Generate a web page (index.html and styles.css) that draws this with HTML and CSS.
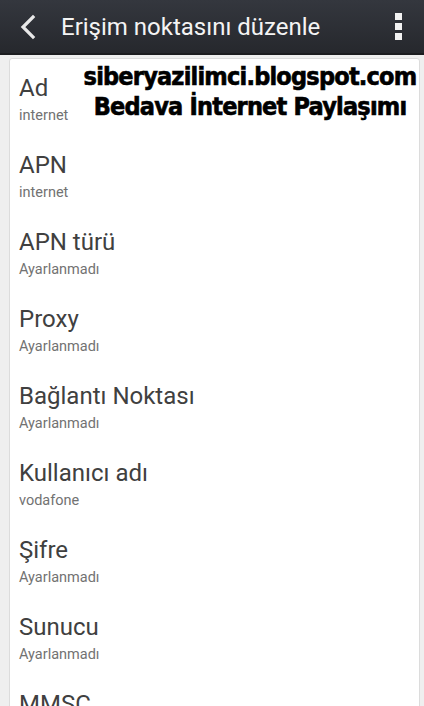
FILE: index.html
```html
<!DOCTYPE html>
<html lang="tr">
<head>
<meta charset="utf-8">
<link rel="stylesheet" href="styles.css">
</head>
<body>
<header class="bar">
  <svg class="back" width="20" height="26" viewBox="0 0 20 26"><path d="M15 3 L5 13 L15 23" fill="none" stroke="#e8e8e8" stroke-width="3.2" stroke-linecap="square"/></svg>
  <h1 class="title">Erişim noktasını düzenle</h1>
  <div class="menu"><span></span><span></span><span></span></div>
</header>
<main class="page">
  <section class="card">
    <div class="row"><div class="t">Ad</div><div class="s">internet</div></div>
    <div class="row"><div class="t">APN</div><div class="s">internet</div></div>
    <div class="row"><div class="t">APN türü</div><div class="s">Ayarlanmadı</div></div>
    <div class="row"><div class="t">Proxy</div><div class="s">Ayarlanmadı</div></div>
    <div class="row"><div class="t">Bağlantı Noktası</div><div class="s">Ayarlanmadı</div></div>
    <div class="row"><div class="t">Kullanıcı adı</div><div class="s">vodafone</div></div>
    <div class="row"><div class="t">Şifre</div><div class="s">Ayarlanmadı</div></div>
    <div class="row"><div class="t">Sunucu</div><div class="s">Ayarlanmadı</div></div>
    <div class="row"><div class="t">MMSC</div></div>
  </section>
  <div class="watermark">
    <div>siberyazilimci.blogspot.com</div>
    <div>Bedava İnternet Paylaşımı</div>
  </div>
</main>
</body>
</html>
```
FILE: styles.css
```css
html, body { margin: 0; padding: 0; }
body {
  width: 424px;
  height: 706px;
  overflow: hidden;
  background: #efefef;
  font-family: Roboto, "Noto Sans", sans-serif;
}
.bar {
  height: 55px;
  background: linear-gradient(#34373e, #26282d);
  border-bottom: 2px solid #1c1d20;
  display: flex;
  align-items: center;
  box-sizing: border-box;
  padding: 0 0 0 18px;
}
.back { flex: none; margin-top: 1px; }
.title {
  margin: 0 0 0 23px;
  font-weight: 400;
  font-size: 24px;
  color: #f4f4f4;
  flex: 1;
}
.menu {
  display: flex;
  flex-direction: column;
  gap: 3px;
  margin-right: 22px;
}
.menu span { width: 7px; height: 7px; background: #f2f2f2; display: block; }
.page { position: relative; padding: 3px 4px 0 9px; height: 651px; overflow: hidden; }
.card {
  background: #fff;
  border: 1px solid #dcdcdc;
  border-radius: 3px 3px 0 0;
  min-height: 100%;
  box-sizing: border-box;
}
.row { padding: 15px 10px 11px 9px; height: 77px; box-sizing: border-box; }
.t { font-size: 24px; line-height: 28px; color: #404040; }
.s { font-size: 14.5px; line-height: 18px; color: #727272; margin-top: 5px; }
.watermark {
  position: absolute;
  top: 7px;
  left: 80px;
  width: 340px;
  text-align: center;
  font-family: "DejaVu Sans Condensed", "DejaVu Sans", sans-serif;
  font-weight: bold;
  font-stretch: condensed;
  font-size: 25px;
  line-height: 30px;
  color: #000;
  letter-spacing: -0.8px;
  -webkit-text-stroke: 0.6px #000;
}
```
